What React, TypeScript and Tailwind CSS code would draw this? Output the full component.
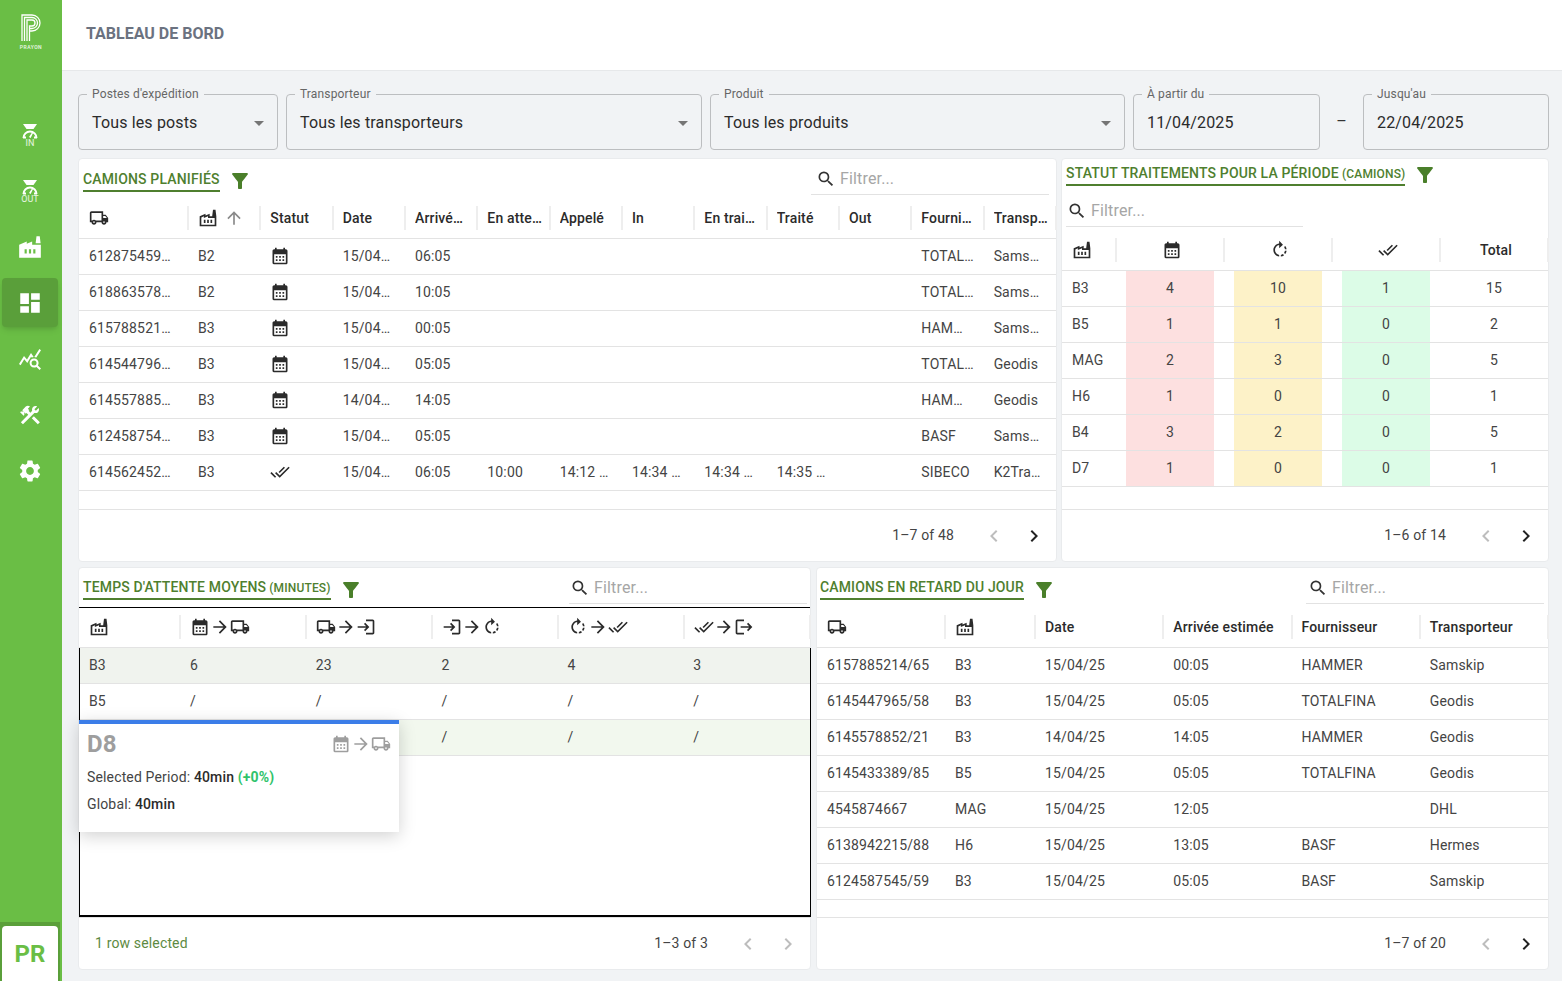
import type { ReactNode } from "react";
import {
  MdArrowDropDown,
  MdArrowForward,
  MdArrowUpward,
  MdCalendarMonth,
  MdChevronLeft,
  MdChevronRight,
  MdDashboard,
  MdDoneAll,
  MdFactory,
  MdFilterAlt,
  MdLogin,
  MdLogout,
  MdOutlineFactory,
  MdOutlineLocalShipping,
  MdQueryStats,
  MdRotateRight,
  MdSearch,
  MdSettings,
} from "react-icons/md";

const planned = [
  ["6128754590/12", "B2", "cal", "15/04/25", "06:05", "", "", "", "", "", "", "TOTALFINA", "Samskip"],
  ["6188635782/14", "B2", "cal", "15/04/25", "10:05", "", "", "", "", "", "", "TOTALFINA", "Samskip"],
  ["6157885214/65", "B3", "cal", "15/04/25", "00:05", "", "", "", "", "", "", "HAMMER", "Samskip"],
  ["6145447965/58", "B3", "cal", "15/04/25", "05:05", "", "", "", "", "", "", "TOTALFINA", "Geodis"],
  ["6145578852/21", "B3", "cal", "14/04/25", "14:05", "", "", "", "", "", "", "HAMMER", "Geodis"],
  ["6124587545/59", "B3", "cal", "15/04/25", "05:05", "", "", "", "", "", "", "BASF", "Samskip"],
  ["6145624521/33", "B3", "done", "15/04/25", "06:05", "10:00", "14:12 15/04", "14:34 15/04", "14:34 15/04", "14:35 15/04", "", "SIBECO", "K2Transport"],
];

const status = [
  ["B3", "4", "10", "1", "15"],
  ["B5", "1", "1", "0", "2"],
  ["MAG", "2", "3", "0", "5"],
  ["H6", "1", "0", "0", "1"],
  ["B4", "3", "2", "0", "5"],
  ["D7", "1", "0", "0", "1"],
];

const waits = [
  { name: "B3", cells: ["6", "23", "2", "4", "3"], bg: "bg-[#f0f3ee]" },
  { name: "B5", cells: ["/", "/", "/", "/", "/"], bg: "bg-white" },
  { name: "D8", cells: ["/", "/", "/", "/", "/"], bg: "bg-[#f2f8ee]" },
];

const late = [
  ["6157885214/65", "B3", "15/04/25", "00:05", "HAMMER", "Samskip"],
  ["6145447965/58", "B3", "15/04/25", "05:05", "TOTALFINA", "Geodis"],
  ["6145578852/21", "B3", "14/04/25", "14:05", "HAMMER", "Geodis"],
  ["6145433389/85", "B5", "15/04/25", "05:05", "TOTALFINA", "Geodis"],
  ["4545874667", "MAG", "15/04/25", "12:05", "", "DHL"],
  ["6138942215/88", "H6", "15/04/25", "13:05", "BASF", "Hermes"],
  ["6124587545/59", "B3", "15/04/25", "05:05", "BASF", "Samskip"],
];

function ScaleIcon({ label }: { label: string }) {
  return (
    <div className="flex flex-col items-center pt-[1px]">
      <svg width="16" height="15" viewBox="0 0 16 15" fill="white">
        <path d="M1 0h14l-3.500 5h-7z" />
        <path d="M1.500 15a6.500 6.500 0 0 1 13 0" fill="none" stroke="white" strokeWidth="2" transform="translate(0 -1)" />
        <path d="M1 12.500h3v2H1zM12 12.500h3v2h-3z" />
        <path d="M7 13l3-4.500 1 .6-2.300 5z" />
      </svg>
      <span className="text-[9px] leading-[8px] tracking-normal text-white/85">{label}</span>
    </div>
  );
}

function HammerWrench() {
  return (
    <svg width="24" height="24" viewBox="0 0 24 24" fill="currentColor">
      <path d="M13.78 15.3L19.78 21.3L21.89 19.14L15.89 13.14L13.78 15.3M17.5 10.1C17.11 10.1 16.69 10.05 16.36 9.91L4.97 21.25L2.86 19.14L10.27 11.74L8.5 9.96L7.78 10.66L6.33 9.25V12.11L5.63 12.81L2.11 9.25L2.81 8.55H5.62L4.22 7.14L7.78 3.58C8.95 2.41 10.83 2.41 12 3.58L9.89 5.74L11.3 7.14L10.59 7.85L12.38 9.63L14.2 7.75C14.06 7.42 14 7 14 6.63C14 4.66 15.56 3.11 17.5 3.11C18.09 3.11 18.61 3.25 19.08 3.53L16.41 6.2L17.91 7.7L20.58 5.03C20.86 5.5 21 6 21 6.63C21 8.55 19.45 10.1 17.5 10.1Z" />
    </svg>
  );
}

function Logo() {
  return (
    <div className="flex flex-col items-center">
      <svg width="20" height="27" viewBox="0 0 20 27" fill="none" stroke="white" strokeWidth="1.3">
        <path d="M1 27V1h10a8 8 0 0 1 0 16H8" />
        <path d="M3.500 27V3.500h7.500a5.500 5.500 0 0 1 0 11H8" />
        <path d="M6 27V6h5a3 3 0 0 1 0 6H8.500v15" />
      </svg>
      <span className="mt-[3px] text-[5px] leading-[6px] font-medium tracking-[0.5px] text-white/90">PRAYON</span>
    </div>
  );
}

function Sidebar() {
  const item = "flex h-[49px] w-[56px] items-center justify-center rounded text-white";
  return (
    <aside className="flex h-full w-[62px] shrink-0 flex-col bg-[#6abe45]">
      <div className="flex h-[110px] shrink-0 justify-center pt-[14px]">
        <Logo />
      </div>
      <nav className="flex flex-col items-center gap-[7px] pr-[2px]">
        <div className={item}><ScaleIcon label="IN" /></div>
        <div className={item}><ScaleIcon label="OUT" /></div>
        <div className={item}><MdFactory size={26} /></div>
        <div className={`${item} bg-[#5a9f3a] shadow-md`}><MdDashboard size={26} /></div>
        <div className={item}><MdQueryStats size={24} /></div>
        <div className={item}><HammerWrench /></div>
        <div className={item}><MdSettings size={26} /></div>
      </nav>
      <div className="mt-auto mr-[2px] bg-[#5a9f3a] px-[2px] pt-[4px]">
        <div className="flex h-[55px] items-center justify-center rounded-t bg-white text-2xl font-bold text-[#6abe45]">PR</div>
      </div>
    </aside>
  );
}

function Field({ label, value, select, className }: { label: string; value: string; select?: boolean; className: string }) {
  return (
    <div className={`relative flex h-[56px] items-center justify-between rounded border border-[#bcbec0] pt-[2px] pr-[6px] pl-[13px] ${className}`}>
      <span className="absolute top-[-9px] left-[8px] bg-[#f1f3f5] px-[5px] text-xs leading-4 text-[#666]">{label}</span>
      <span className="text-base text-[#2b2b2b]">{value}</span>
      {select && <MdArrowDropDown size={24} className="text-[#757575]" />}
    </div>
  );
}

function Panel({ className, children }: { className: string; children: ReactNode }) {
  return <section className={`flex flex-col rounded border border-[#e9ebed] bg-white ${className}`}>{children}</section>;
}

function Title({ text, unit, low }: { text: string; unit?: string; low?: boolean }) {
  return (
    <div className="flex items-start gap-2 pt-[1px]">
      <h2 className="border-b-2 border-[#4f7f2f] text-sm leading-[21px] font-medium whitespace-nowrap text-[#4f7f2f]">
        {text}
        {unit && <span className="text-xs"> {unit}</span>}
      </h2>
      <MdFilterAlt size={24} className={low ? "mt-[1px] text-[#4a7f2a]" : "text-[#4a7f2a]"} />
    </div>
  );
}

function Search({ className }: { className: string }) {
  return (
    <div className={`flex h-[31px] items-center gap-[4px] border-b border-[#e2e2e2] pl-[1px] ${className}`}>
      <MdSearch size={20} className="text-[#333]" />
      <span className="text-base text-[#a6a6a6]">Filtrer...</span>
    </div>
  );
}

function Pager({ text, left, active }: { text: string; left?: string; active: boolean }) {
  return (
    <div className="flex h-[52px] shrink-0 items-center border-t border-[#e3e3e3] pr-[10px] pl-[16px] text-sm text-[#444]">
      {left && <span className="pb-[2px] text-[#5d8a42]">{left}</span>}
      <span className="mr-[28px] ml-auto pb-[2px]">{text}</span>
      <div className="flex gap-4">
        <MdChevronLeft size={24} className="text-[#bdbdbd]" />
        <MdChevronRight size={24} className={active ? "text-[#222]" : "text-[#bdbdbd]"} />
      </div>
    </div>
  );
}

function Head({ children, center }: { children: ReactNode; center?: boolean }) {
  return (
    <div className={`-mr-[1px] flex h-[24px] min-w-0 items-center gap-[2px] border-r-2 border-[#eeeeee] text-sm font-medium text-[#2b2b2b] ${center ? "justify-center pr-[10px] pl-[15px]" : "pr-[6px] pl-[10px]"}`}>
      {children}
    </div>
  );
}

function Label({ text }: { text: string }) {
  return <span className="truncate">{text}</span>;
}

function Flow({ a, b }: { a: ReactNode; b: ReactNode }) {
  return (
    <div className="flex items-center text-[#2b2b2b]">
      {a}
      <MdArrowForward size={20} />
      {b}
    </div>
  );
}

const truck = <MdOutlineLocalShipping size={20} />;
const site = <MdOutlineFactory size={20} />;
const calendar = <MdCalendarMonth size={20} />;
const enter = <MdLogin size={20} />;
const turn = <MdRotateRight size={20} />;
const done = <MdDoneAll size={20} />;
const leave = <MdLogout size={20} />;

function PlannedTable() {
  return (
    <Panel className="h-full min-w-0 flex-1">
      <div className="flex h-[40px] shrink-0 items-start justify-between pt-[9px] pr-[7px] pl-[4px]">
        <Title text="CAMIONS PLANIFIÉS" />
        <Search className="-mt-[4px] w-[238px] pl-[5px]" />
      </div>
      <div className="grid h-[40px] shrink-0 grid-cols-[109px_repeat(12,minmax(0,1fr))] items-center border-b border-[#e3e3e3] pb-[2px]">
        <Head>{truck}</Head>
        <Head>{site}<MdArrowUpward size={20} className="ml-[4px] shrink-0 text-[#8a8a8a]" /></Head>
        {["Statut", "Date", "Arrivée estimée", "En attente", "Appelé", "In", "En traitement", "Traité", "Out", "Fournisseur", "Transporteur"].map((h) => (
          <Head key={h}><Label text={h} /></Head>
        ))}
      </div>
      {planned.map((row) => (
        <div key={row[0]} className="grid h-[36px] shrink-0 grid-cols-[109px_repeat(12,minmax(0,1fr))] items-center border-b border-[#e3e3e3] pb-[2px] text-sm text-[#444]">
          {row.map((cell, i) => (
            <div key={i} className="min-w-0 truncate px-[10px]">
              {cell === "cal" ? <MdCalendarMonth size={20} className="text-[#2b2b2b]" /> : cell === "done" ? <MdDoneAll size={20} className="text-[#2b2b2b]" /> : cell}
            </div>
          ))}
        </div>
      ))}
      <div className="flex-1" />
      <Pager text="1–7 of 48" active />
    </Panel>
  );
}

function StatusTable() {
  return (
    <Panel className="h-full w-[488px] shrink-0">
      <div className="flex h-[30px] shrink-0 items-start pt-[3px] pl-[4px]">
        <Title text="STATUT TRAITEMENTS POUR LA PÉRIODE" unit="(CAMIONS)" />
      </div>
      <Search className="mt-[7px] ml-[4px] w-[237px] shrink-0" />
      <div className="mt-[5px] grid h-[39px] shrink-0 grid-cols-[54px_repeat(4,minmax(0,1fr))] items-center border-b border-[#e3e3e3] pb-[2px]">
        <Head>{site}</Head>
        <Head center>{calendar}</Head>
        <Head center>{turn}</Head>
        <Head center>{done}</Head>
        <Head center>Total</Head>
      </div>
      {status.map((row) => (
        <div key={row[0]} className="grid h-[36px] shrink-0 grid-cols-[54px_repeat(4,minmax(0,1fr))] border-b border-[#e3e3e3] text-sm text-[#444]">
          <div className="flex items-center px-[10px] pb-[2px]">{row[0]}</div>
          <div className="mx-[10px] flex items-center justify-center bg-[#fde0e0] pb-[2px]">{row[1]}</div>
          <div className="mx-[10px] flex items-center justify-center bg-[#fdf2c8] pb-[2px]">{row[2]}</div>
          <div className="mx-[10px] flex items-center justify-center bg-[#dcfce7] pb-[2px]">{row[3]}</div>
          <div className="flex items-center justify-center pb-[2px]">{row[4]}</div>
        </div>
      ))}
      <div className="flex-1" />
      <Pager text="1–6 of 14" active />
    </Panel>
  );
}

function WaitTable() {
  return (
    <Panel className="h-full min-w-0 flex-1">
      <div className="flex h-[39px] shrink-0 items-start justify-between pt-[8px] pr-[3px] pl-[4px]">
        <Title text="TEMPS D'ATTENTE MOYENS" unit="(MINUTES)" low />
        <Search className="-mt-[3px] w-[238px]" />
      </div>
      <div className="grid h-[41px] shrink-0 grid-cols-[101px_repeat(5,minmax(0,1fr))] items-center border-t border-b border-t-black border-b-[#e3e3e3] pb-[1px]">
        <Head>{site}</Head>
        <Head><Flow a={calendar} b={truck} /></Head>
        <Head><Flow a={truck} b={enter} /></Head>
        <Head><Flow a={enter} b={turn} /></Head>
        <Head><Flow a={turn} b={done} /></Head>
        <Head><Flow a={done} b={leave} /></Head>
      </div>
      <div className="relative -mr-[1px] flex-1 border-x border-b-2 border-black">
        {waits.map((row) => (
          <div key={row.name} className={`grid h-[36px] grid-cols-[101px_repeat(5,minmax(0,1fr))] items-center border-b border-[#e3e3e3] pb-[2px] text-sm text-[#444] ${row.bg}`}>
            <div className="px-[9px]">{row.name}</div>
            {row.cells.map((c, i) => (
              <div key={i} className="px-[9px]">{c}</div>
            ))}
          </div>
        ))}
        <div className="absolute top-[72px] -left-[1px] h-[112px] w-[320px] border-t-4 border-[#3b7de8] bg-white px-[8px] pt-[4px] shadow-[0_4px_16px_rgba(0,0,0,0.18)]">
          <div className="flex items-center justify-between">
            <span className="text-2xl leading-8 font-bold text-[#9e9e9e]">D8</span>
            <div className="flex items-center text-[#9e9e9e]">
              {calendar}
              <MdArrowForward size={20} />
              {truck}
            </div>
          </div>
          <p className="mt-[7px] text-sm leading-5 text-[#444]">
            Selected Period: <b className="font-medium text-[#2b2b2b]">40min</b> <b className="font-bold text-[#2fc36b]">(+0%)</b>
          </p>
          <p className="mt-[7px] text-sm leading-5 text-[#444]">
            Global: <b className="font-medium text-[#2b2b2b]">40min</b>
          </p>
        </div>
      </div>
      <Pager text="1–3 of 3" left="1 row selected" active={false} />
    </Panel>
  );
}

function LateTable() {
  return (
    <Panel className="h-full min-w-0 flex-1">
      <div className="flex h-[40px] shrink-0 items-start justify-between pt-[8px] pr-[4px] pl-[3px]">
        <Title text="CAMIONS EN RETARD DU JOUR" low />
        <Search className="-mt-[3px] w-[238px] pl-[2px]" />
      </div>
      <div className="grid h-[40px] shrink-0 grid-cols-[128px_90px_repeat(4,minmax(0,1fr))] items-center border-b border-[#e3e3e3] pb-[2px]">
        <Head>{truck}</Head>
        <Head>{site}</Head>
        <Head>Date</Head>
        <Head>Arrivée estimée</Head>
        <Head>Fournisseur</Head>
        <Head>Transporteur</Head>
      </div>
      {late.map((row) => (
        <div key={row[0]} className="grid h-[36px] shrink-0 grid-cols-[128px_90px_repeat(4,minmax(0,1fr))] items-center border-b border-[#e3e3e3] pb-[2px] text-sm text-[#444]">
          {row.map((cell, i) => (
            <div key={i} className="min-w-0 truncate px-[10px]">{cell}</div>
          ))}
        </div>
      ))}
      <div className="flex-1" />
      <Pager text="1–7 of 20" active />
    </Panel>
  );
}

export default function App() {
  return (
    <div className="flex h-screen overflow-hidden bg-[#f1f3f5] font-['Roboto',sans-serif] tracking-[0.15px]">
      <Sidebar />
      <div className="flex min-w-0 flex-1 flex-col">
        <header className="flex h-[71px] shrink-0 items-center border-b border-[#e6e8ea] bg-white pb-[3px] pl-[24px] text-base font-bold tracking-normal text-[#6b7280]">
          TABLEAU DE BORD
        </header>
        <main className="flex min-h-0 flex-1 flex-col pt-[23px] pr-[13px] pb-[11px] pl-[16px]">
          <div className="flex shrink-0 items-center gap-2">
            <Field label="Postes d'expédition" value="Tous les posts" select className="w-[200px]" />
            <Field label="Transporteur" value="Tous les transporteurs" select className="w-[416px]" />
            <Field label="Produit" value="Tous les produits" select className="w-[415px]" />
            <Field label="À partir du" value="11/04/2025" className="w-[187px]" />
            <span className="w-[27px] text-center text-[#333]">–</span>
            <Field label="Jusqu'au" value="22/04/2025" className="w-[186px]" />
          </div>
          <div className="mt-2 flex h-[404px] shrink-0 gap-1">
            <PlannedTable />
            <StatusTable />
          </div>
          <div className="mt-[5px] flex min-h-0 flex-1 gap-[5px]">
            <WaitTable />
            <LateTable />
          </div>
        </main>
      </div>
    </div>
  );
}
